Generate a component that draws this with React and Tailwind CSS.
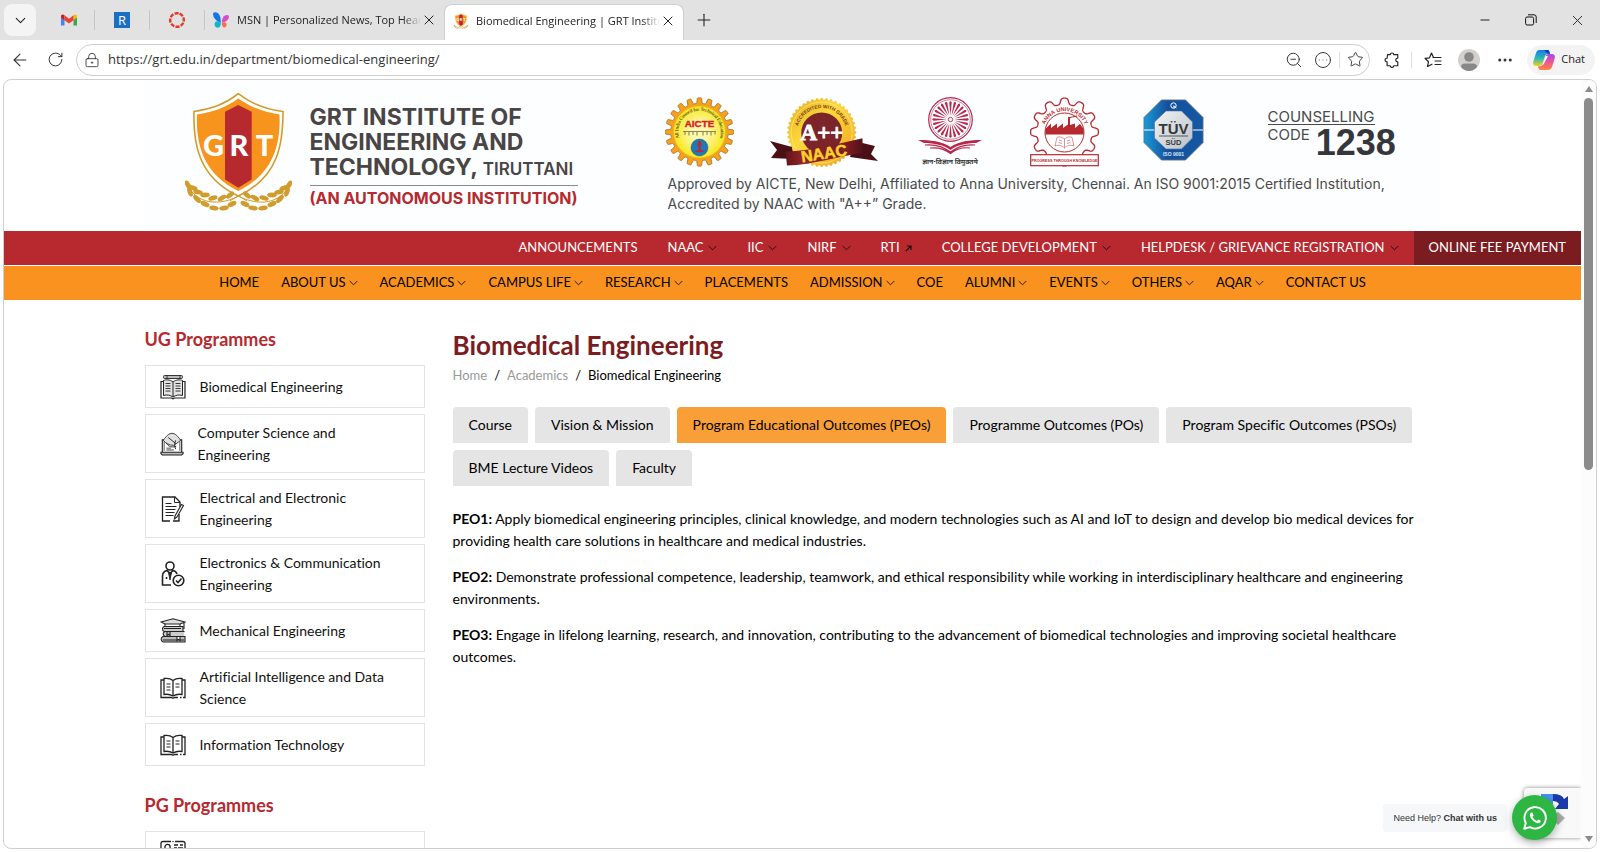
import React from 'react';
import {
    ArrowLeft, RotateCw, LockKeyhole, ZoomOut, Star, Plus, X, ChevronDown, Minus, Ellipsis, CircleEllipsis
} from 'lucide-react';

const wavePath = (cx, cy, radius, depth, teeth, sharp) => {
    const points = [];
    for (let i = 0; i < 480; i++) {
        const a = (i / 480) * Math.PI * 2;
        const r = radius - depth / 2 + (depth / 2) * Math.tanh(sharp * Math.cos(teeth * a));
        points.push(`${(cx + r * Math.sin(a)).toFixed(2)} ${(cy - r * Math.cos(a)).toFixed(2)}`);
    }
    return `M${points.join('L')}Z`;
};

const topLinks = [
    { label: 'ANNOUNCEMENTS' },
    { label: 'NAAC', menu: true },
    { label: 'IIC', menu: true },
    { label: 'NIRF', menu: true },
    { label: 'RTI', external: true },
    { label: 'COLLEGE DEVELOPMENT', menu: true },
    { label: 'HELPDESK / GRIEVANCE REGISTRATION', menu: true },
];

const mainLinks = [
    { label: 'HOME' },
    { label: 'ABOUT US', menu: true },
    { label: 'ACADEMICS', menu: true },
    { label: 'CAMPUS LIFE', menu: true },
    { label: 'RESEARCH', menu: true },
    { label: 'PLACEMENTS' },
    { label: 'ADMISSION', menu: true },
    { label: 'COE' },
    { label: 'ALUMNI', menu: true },
    { label: 'EVENTS', menu: true },
    { label: 'OTHERS', menu: true },
    { label: 'AQAR', menu: true },
    { label: 'CONTACT US' },
];

const tabs = [
    'Course',
    'Vision & Mission',
    'Program Educational Outcomes (PEOs)',
    'Programme Outcomes (POs)',
    'Program Specific Outcomes (PSOs)',
    'BME Lecture Videos',
    'Faculty',
];

const outcomes = [
    { id: 'PEO1:', text: 'Apply biomedical engineering principles, clinical knowledge, and modern technologies such as AI and IoT to design and develop bio medical devices for providing health care solutions in healthcare and medical industries.' },
    { id: 'PEO2:', text: 'Demonstrate professional competence, leadership, teamwork, and ethical responsibility while working in interdisciplinary healthcare and engineering environments.' },
    { id: 'PEO3:', text: 'Engage in lifelong learning, research, and innovation, contributing to the advancement of biomedical technologies and improving societal healthcare outcomes.' },
];

/* ---------- Logos ---------- */

const leaves = [
    [3, 92, 60], [8, 95, 20], [5, 99, 70], [13, 99, 10], [12, 106, 45], [20, 102, 0],
    [20, 111, 25], [28, 105, -15], [29, 115, 10], [37, 105, -30], [39, 115, -10], [45, 102, -40], [47, 111, -25],
];

const Laurel = () => (
    <g fill="#d09c2c">
        {leaves.map(([x, y, angle]) => (
            <ellipse key={`${x}-${y}`} cx={x} cy={y} rx="4.8" ry="2.4" transform={`rotate(${angle} ${x} ${y})`} />
        ))}
        <path d="M1 89C8 107 28 116 54 103L62 108" fill="none" stroke="#d09c2c" strokeWidth="1" />
    </g>
);

const Shield = ({ className }) => (
    <svg viewBox="0 0 107 119" className={className} aria-label="GRT">
        <path d="M53.3.7C42 10 25 16.500 9 18.500C8 50 13 84 53.300 103C94 84 98 50 98 18.500C82 16.500 65 10 53.300.7Z" fill="#fff" stroke="#d09c2c" strokeWidth="1.6" />
        <path d="M53.300 5.500C42 14 27 19.500 12 21.500C11 50 17 80 53.300 98C90 80 95.500 50 94.500 21.500C80 19.500 65 14 53.300 5.500Z" fill="#f7941d" />
        <path d="M40 18.700L53.300 12L66.700 18.700V86.500L53.300 94.700L40 86.500Z" fill="#b6292f" />
        <g fill="#fff" fontFamily="Lato, sans-serif" fontWeight="900" fontSize="29" textAnchor="middle">
            <text x="28.500" y="63">G</text>
            <text x="53.800" y="63">R</text>
            <text x="79.500" y="63">T</text>
        </g>
        <Laurel />
        <g transform="matrix(-1 0 0 1 107 0)"><Laurel /></g>
    </svg>
);

const AicteLogo = () => (
    <svg viewBox="0 0 69 70" className="w-[69px] h-[70px] shrink-0" aria-label="AICTE">
        <defs>
            <radialGradient id="aicte">
                <stop offset="0.3" stopColor="#fff9b0" />
                <stop offset="1" stopColor="#f8e71c" />
            </radialGradient>
            <path id="aicteArc" d="M15.500 50A24.200 24.200 0 1 1 53.500 50" />
        </defs>
        <path d={wavePath(34.5, 35, 34.2, 5.5, 20, 4)} fill="#f5a01e" stroke="#9a7430" strokeWidth="0.8" />
        <circle cx="34.500" cy="35" r="26" fill="url(#aicte)" stroke="#e8b91b" strokeWidth="0.6" />
        <text fontSize="5" fontWeight="700" fontFamily="Liberation Serif, serif" fill="#6e6428" dy="3">
            <textPath href="#aicteArc" startOffset="50%" textAnchor="middle">All India Council for Technical Education</textPath>
        </text>
        <text x="34.500" y="30" fontSize="9.800" fontWeight="700" fontFamily="Liberation Sans, sans-serif" textAnchor="middle" fill="#d5202a" stroke="#d5202a" strokeWidth="0.4">AICTE</text>
        <path d="M18 34.500H51M20 34.500v3.500M24 34.500v4M28 34.500v3.500M32 34.500v4M38 34.500v4M42 34.500v3.500M46 34.500v4M50 34.500v3" stroke="#8c8350" strokeWidth="1.100" fill="none" />
        <circle cx="34.500" cy="50.500" r="8.500" fill="#2079b5" stroke="#175b8b" strokeWidth="0.500" />
        <path d="M34.500 43C37 46 37 48 35.500 50V52.500L40 55H29L33.500 52.500V50C32 48 32 46 34.500 43Z" fill="#b62a35" />
    </svg>
);

const NaacLogo = () => (
    <svg viewBox="0 0 108 71" className="w-[108px] h-[71px] shrink-0" aria-label="NAAC A++">
        <defs>
            <linearGradient id="seal" x1="0" y1="0" x2="1" y2="1">
                <stop offset="0" stopColor="#e5a91c" />
                <stop offset="0.400" stopColor="#fbd93c" />
                <stop offset="1" stopColor="#f0a01c" />
            </linearGradient>
            <linearGradient id="ribbon">
                <stop offset="0" stopColor="#5f151b" />
                <stop offset="0.200" stopColor="#8f2227" />
                <stop offset="0.800" stopColor="#7e1c22" />
                <stop offset="1" stopColor="#4f1218" />
            </linearGradient>
            <path id="naacArc" d="M27.500 39A24.500 24.500 0 1 1 76 39" />
        </defs>
        <path d={wavePath(51.7, 35.5, 35, 2.5, 44, 1)} fill="url(#seal)" />
        <circle cx="51.700" cy="35.500" r="30.500" fill="none" stroke="#fbe682" strokeWidth="0.800" />
        <text fontSize="4.800" fontFamily="Liberation Sans, sans-serif" fontWeight="700" fill="#7b3b1c">
            <textPath href="#naacArc" startOffset="50%" textAnchor="middle">ACCREDITED WITH GRADE</textPath>
        </text>
        <circle cx="51.700" cy="36" r="20.500" fill="#7b2429" />
        <text x="52" y="43" fontFamily="Liberation Serif, serif" fontSize="23" fontWeight="700" textAnchor="middle" fill="#fff" stroke="#fff" strokeWidth="0.900">A++</text>
        <path d="M0 44L22 50L24 62L1 61L7 53Z" fill="#4b1015" />
        <path d="M108 64L101 57L105 49L84 44L80 60Z" fill="#4b1015" />
        <path d="M15.500 54.500C42 54 66 47 92.500 41.300V56C67 59 44 68 17 68.500Z" fill="url(#ribbon)" />
        <text x="54" y="62" fontFamily="Liberation Sans, sans-serif" fontWeight="700" fontSize="16" textAnchor="middle" fill="#f6d32b" stroke="#f6d32b" strokeWidth="0.500" transform="rotate(-9 53 57)">NAAC</text>
    </svg>
);

const UgcLogo = () => (
    <svg viewBox="0 0 64 70" className="w-16 h-[70px] shrink-0" fill="none" stroke="#b8264a" aria-label="UGC">
        <circle cx="32.500" cy="22.500" r="21.800" strokeWidth="1.200" />
        <circle cx="32.500" cy="22.500" r="19.800" strokeWidth="0.600" />
        {Array.from({ length: 24 }, (_, i) => (
            <path key={i} d="M32.500 18.500L31.300 5.500Q32.500 3 33.700 5.500Z" fill="#b8264a" stroke="none" transform={`rotate(${i * 15} 32.500 22.500)`} />
        ))}
        <circle cx="32.500" cy="22.500" r="2.200" fill="#fff" strokeWidth="0.900" />
        <path d="M0 43C12 43 24 44 32.500 50C41 44 52 43 64 43L58 46C48 46 39 48 32.500 53C26 48 16 46 6 46Z" fill="#b8264a" stroke="none" />
        <path d="M7 48C18 47 26 50 32.500 55C39 50 47 47 57 48M12 51C21 50 27 52 32.500 56.500C38 52 44 50 52 51" strokeWidth="1.200" />
        <text x="32" y="66.500" textAnchor="middle" fontFamily="Noto Sans Devanagari, Noto Sans, sans-serif" fontSize="6.800" fontWeight="700" fill="#333" stroke="none">ज्ञान-विज्ञान विमुक्तये</text>
    </svg>
);

const AnnaLogo = () => (
    <svg viewBox="0 0 69 70" className="w-[69px] h-[70px] shrink-0" fill="none" stroke="#b6292f" aria-label="Anna University">
        <defs><path id="annaArc" d="M13.500 38A21.400 21.400 0 1 1 56 38" /></defs>
        <path d={wavePath(34.5, 35, 34, 6.5, 12, 2)} fill="#fff" strokeWidth="1.300" />
        <circle cx="34.500" cy="35.500" r="19.500" strokeWidth="1" />
        <text fontSize="5.600" fontFamily="Liberation Sans, sans-serif" fontWeight="700" fill="#b6292f" stroke="none">
            <textPath href="#annaArc" startOffset="50%" textAnchor="middle">ANNA UNIVERSITY</textPath>
        </text>
        <path d="M15.300 37.500V32L21 26.500V31L27 26.500V31L33 26.500V31L38 27.500V20H40V28L45 26.500V31L50 27L53.700 32V37.500Z" fill="#b6292f" stroke="none" />
        <path d="M40 20.500L47 19" strokeWidth="1" />
        <path d="M34.500 51V42C31 39.500 29 39.500 27 40.500L25 49C29 47.500 32 48.500 34.500 51C37 48.500 40 47.500 44 49L42 40.500C40 39.500 38 39.500 34.500 42M29 43l3 1M28.500 45.500l3.500 1M40 43l-3 1M40.500 45.500l-3.500 1" strokeWidth="0.500" />
        <rect x="0.700" y="57.700" width="67.600" height="11" fill="#fff" strokeWidth="1.200" />
        <text x="34.500" y="64.600" textAnchor="middle" fontSize="3.700" fontFamily="Liberation Sans, sans-serif" fontWeight="700" fill="#b6292f" stroke="none">PROGRESS THROUGH KNOWLEDGE</text>
    </svg>
);

const TuvLogo = () => (
    <svg viewBox="0 0 61 62" className="w-[61px] h-[62px] shrink-0" aria-label="TÜV SÜD ISO 9001">
        <defs>
            <linearGradient id="tuv" x1="0" y1="0" x2="1" y2="0">
                <stop offset="0" stopColor="#1a9bd8" />
                <stop offset="0.400" stopColor="#14509c" />
                <stop offset="1" stopColor="#1458a4" />
            </linearGradient>
            <linearGradient id="steel" x1="0" y1="0" x2="1" y2="1">
                <stop offset="0" stopColor="#f2f4f5" />
                <stop offset="1" stopColor="#b9bfc4" />
            </linearGradient>
        </defs>
        <path d="M18.500 1H42.500L60 18.500V43.500L42.500 61H18.500L1 43.500V18.500Z" fill="url(#tuv)" stroke="#5c6c80" strokeWidth="0.900" />
        <path d="M1 31H60" stroke="#fff" strokeWidth="1.200" />
        <path d="M23 12H38.500L49.500 23V39L38.500 50H23L11.500 39V23Z" fill="url(#steel)" stroke="#51739c" strokeWidth="0.600" />
        <circle cx="30.500" cy="6.500" r="2.700" fill="none" stroke="#fff" strokeWidth="1" />
        <path d="M31 6.500v3M30.500 7l3 2" stroke="#fff" strokeWidth="0.800" />
        <g fontFamily="Liberation Sans, sans-serif" textAnchor="middle">
            <text x="30.500" y="35" fontSize="15" fontWeight="700" fill="#34383c">TÜV</text>
            <path d="M16 37H45" stroke="#34383c" strokeWidth="0.800" />
            <text x="30.500" y="46" fontSize="7.500" fontWeight="700" fill="#34383c">SÜD</text>
            <text x="30.500" y="57" fontSize="5" fontWeight="700" fill="#dce9f7">ISO 9001</text>
        </g>
    </svg>
);

/* ---------- Sidebar icons ---------- */

const iconProps = {
    viewBox: '0 0 26 26',
    fill: 'none',
    stroke: '#222',
    strokeWidth: 1.2,
};

const NotebookIcon = () => (
    <svg {...iconProps} className="w-[26px] h-[26px] shrink-0">
        <rect x="3.500" y="1.500" width="19" height="3" rx="1" fill="#bbb" strokeWidth="0.900" />
        <path d="M7 1.500v3M20 1.500v3" strokeWidth="0.800" />
        <path d="M3 7.500H1V24h10.500l1.500.8 1.500-.8H25V7.500h-2" />
        <path d="M13 8C10 5.500 6 5.500 3.500 6.500V21.500C7 20.500 10 21 13 23C16 21 19 20.500 22.500 21.500V6.500C20 5.500 16 5.500 13 8ZV23" fill="#e4e4e4" strokeWidth="1" />
        <path d="M5.500 9.500h5M5.500 12h5M5.500 14.500h5M5.500 17h5M15.500 9.500h5M15.500 12h5M15.500 14.500h5M15.500 17h5" strokeWidth="0.900" />
    </svg>
);

const LaptopIcon = () => (
    <svg {...iconProps} className="w-6 h-[26px] shrink-0">
        <path d="M2.500 22V8.500H5M23.500 22V8.500H21" strokeWidth="1.200" />
        <path d="M4.500 20.500V10M21.500 10V20.500" strokeWidth="0.800" />
        <path d="M3.500 9C8 3 10 1.500 13 1.500S18 3 22.500 9L15 14.500C10 14.500 6 12 3.500 9Z" fill="#e2e2e2" strokeWidth="0.900" />
        <path d="M7 12C9 16 13 17 17.500 15.500M9 6L17 12.500M17 9C15.500 13 15.500 15 17 18.500" strokeWidth="1" />
        <path d="M7 17.500h5M7 19.500h8" strokeWidth="0.900" />
        <path d="M1 22h24v1.500L23.500 25h-21L1 23.500Z" strokeWidth="1.100" fill="#bbb" />
    </svg>
);

const PaperIcon = () => (
    <svg {...iconProps} className="w-[26px] h-[26px] shrink-0">
        <path d="M19 18v7H13M10 25H2.500V1H15l5 5v5" strokeWidth="1.300" />
        <path d="M14.500 1v5.500H20" strokeWidth="1" />
        <path d="M5.500 7.500h6M5.500 10.500h11M5.500 13.500h10M5.500 16.500h9M5.500 19.500h8" strokeWidth="1.100" />
        <path d="M21.500 8.500l2 1-6.500 11.500-2.500 2 .5-3Z" fill="#fff" strokeWidth="1.100" />
    </svg>
);

const PersonIcon = () => (
    <svg {...iconProps} strokeWidth="1.600" className="w-[26px] h-[26px] shrink-0">
        <circle cx="10" cy="5" r="4" />
        <path d="M11 24H2.500V15C2.500 11.500 5 10 7 9.500L10 12.500L13 9.500C15 10 16.500 11 17 13M6.500 16v2" />
        <path d="M8.500 11.500h3L10 19Z" fill="#222" strokeWidth="0.900" />
        <circle cx="18.500" cy="19.500" r="5.300" />
        <path d="M16 19.500l2 2 3.500-4" />
    </svg>
);

const BooksIcon = () => (
    <svg {...iconProps} strokeWidth="1.100" className="w-[26px] h-[26px] shrink-0">
        <path d="M1 4L13 .8L25 4L20 6H5Z M24 4v7" fill="#ddd" />
        <path d="M5 6v2.500h15V6" />
        <path d="M4 8.500h19v5H4c-2-1-2-4 0-5ZM4 10.500h17M24.500 13.500H5c-2.500 1-2.500 3.500 0 5h19" fill="#ccc" />
        <path d="M3 18.500h22v5.500H3c-2.500-1-2.500-4.500 0-5.500ZM3 22h21M7 14v3.500l1.500-1 1.500 1V14M17 19v3.500l1.500-1 1.500 1V19" fill="#bbb" />
    </svg>
);

const BookIcon = () => (
    <svg {...iconProps} strokeWidth="1.300" className="w-[26px] h-[26px] shrink-0">
        <path d="M4 5H1V22.500H11.500L13 23.300L14.500 22.500H18M20 22.500h1.500M23 22.500h2V5H22" />
        <path d="M13 5.500C10.500 3.500 7 3 4 3.500V19.500C7 19 10.500 19.500 13 21C15.500 19.500 19 19 22 19.500V3.500C19 3 15.500 3.500 13 5.500ZV21" />
        <path d="M6.500 9h4M6.500 12h4M6.500 15h4M15.500 9h4M15.500 12h4" strokeWidth="1" />
    </svg>
);

const CardIcon = () => (
    <svg {...iconProps} strokeWidth="1.300" className="w-[26px] h-[26px] shrink-0">
        <path d="M11 1.500H3Q1 1.500 1 3.500V22.500H25V3.500Q25 1.500 23 1.500H15M13 1v1" />
        <circle cx="7.500" cy="7" r="2.600" />
        <path d="M4 14C4 11 11 11 11 14M14 5h4M20 5h3M14 8h3M18 8h5" />
    </svg>
);

const programmes = [
    { label: 'Biomedical Engineering', icon: NotebookIcon },
    { label: 'Computer Science and Engineering', icon: LaptopIcon },
    { label: 'Electrical and Electronic Engineering', icon: PaperIcon },
    { label: 'Electronics & Communication Engineering', icon: PersonIcon },
    { label: 'Mechanical Engineering', icon: BooksIcon },
    { label: 'Artificial Intelligence and Data Science', icon: BookIcon },
    { label: 'Information Technology', icon: BookIcon },
];

/* ---------- Browser chrome ---------- */

const TabStrip = () => (
    <div className="h-10 bg-[#e2e2e2] flex items-center text-[11px] text-[#222] shrink-0">
        <button aria-label="Tab actions" className="ml-1 w-8 h-8 rounded-lg bg-[#f4f4f4] flex items-center justify-center">
            <ChevronDown size={17} strokeWidth={1.5} />
        </button>
        <button aria-label="Gmail" className="w-[59px] h-5 pl-2 border-r border-[#c6c6c6] flex items-center justify-center">
            <svg viewBox="0 0 16 12" className="w-4 h-3">
                <path d="M0 1.500V11.500h3.500V5Z" fill="#4285f4" />
                <path d="M16 1.500V11.500h-3.500V5Z" fill="#34a853" />
                <path d="M12.500 5V1.200Q14.500-.5 16 1.500V3.500L12.500 6.200Z" fill="#fbbc04" />
                <path d="M0 3.500V1.500Q1.500-.5 3.500 1.200V6.200Z" fill="#c5221f" />
                <path d="M3.500 1.200L8 4.700L12.500 1.200V6.200L8 9.500L3.500 6.200Z" fill="#ea4335" />
            </svg>
        </button>
        <button aria-label="R" className="w-[55px] h-5 border-r border-[#c6c6c6] flex items-center justify-center">
            <span className="w-4 h-4 bg-[#1b6ec2] text-white text-[13px] leading-4 text-center">R</span>
        </button>
        <button aria-label="Canvas" className="w-[55px] h-5 border-r border-[#c6c6c6] flex items-center justify-center">
            <svg viewBox="0 0 16 16" className="w-4 h-4">
                <circle cx="8" cy="8" r="6.800" fill="none" stroke="#e4392b" strokeWidth="2.400" strokeDasharray="4.100 1.240" transform="rotate(-68 8 8)" />
            </svg>
        </button>
        <div className="w-[239px] pl-2 flex items-center">
            <svg viewBox="0 0 16 16" className="w-4 h-4 shrink-0">
                <path d="M0 2Q0 0 2.500.3Q6.500 1 7.500 6L7.800 11Q4 9.500 2 7Q0 4.500 0 2Z" fill="#1674ea" />
                <path d="M1.500 12Q2 8.500 5 9.500L7.800 11Q8 15.800 4.500 15.800Q1.500 15 1.500 12Z" fill="#12b5c5" />
                <path d="M16 4.500Q15.500 2.500 12.500 3.300Q9 5 8.800 10.500Q12 10.500 14 8.500Q16 6.500 16 4.500Z" fill="#d34fc4" />
                <path d="M13.500 11.500Q12.500 9.500 8.800 10.500Q8.800 15.500 11.500 15.500Q14 14.500 13.500 11.500Z" fill="#f5714b" />
            </svg>
            <span className="ml-2 w-[184px] overflow-hidden whitespace-nowrap mask-r-from-90%">MSN | Personalized News, Top Headlines</span>
            <button aria-label="Close tab"><X size={16} strokeWidth={1.5} /></button>
        </div>
        <div className="w-60 h-9 mt-1 pl-2 pb-[3px] rounded-t-lg bg-white flex items-center border-t border-x border-[#d0d0d0]">
            <Shield className="w-4 h-4 shrink-0" />
            <span className="ml-[7px] w-[184px] overflow-hidden whitespace-nowrap mask-r-from-90%">Biomedical Engineering | GRT Institute of Engineering</span>
            <button aria-label="Close tab"><X size={16} strokeWidth={1.5} /></button>
        </div>
        <button aria-label="New tab" className="ml-[10px]"><Plus size={20} strokeWidth={1.3} /></button>
        <div className="ml-auto flex items-center">
            <button aria-label="Minimize" className="w-[46px] flex justify-center"><Minus size={14} strokeWidth={1.800} /></button>
            <button aria-label="Restore" className="w-[46px] flex justify-center">
                <svg viewBox="0 0 12 12" className="w-3 h-3" fill="none" stroke="#111">
                    <rect x="0.600" y="3" width="8" height="8" rx="1.500" />
                    <path d="M3 .8h6Q11.200.8 11.200 3v6" />
                </svg>
            </button>
            <button aria-label="Close" className="w-[46px] flex justify-center"><X size={17} strokeWidth={1.300} /></button>
        </div>
    </div>
);

const Toolbar = () => (
    <div className="h-[39px] bg-white flex items-center text-[#333] shrink-0">
        <button aria-label="Back" className="ml-[10px]"><ArrowLeft size={20} strokeWidth={1.300} /></button>
        <button aria-label="Refresh" className="ml-[17px]"><RotateCw size={17} strokeWidth={1.400} /></button>
        <div className="ml-3 h-8 flex-1 rounded-full border border-[#cfcfcf] flex items-center px-[5px]">
            <LockKeyhole size={16} strokeWidth={1.300} className="ml-[2px] shrink-0" />
            <input
                aria-label="Address"
                readOnly
                value="https://grt.edu.in/department/biomedical-engineering/"
                className="ml-2 flex-1 text-[13px] text-[#333] bg-transparent outline-none"
            />
            <button aria-label="Zoom out"><ZoomOut size={18} strokeWidth={1.300} /></button>
            <button aria-label="More" className="ml-[11px]"><CircleEllipsis size={18} strokeWidth={1.300} /></button>
            <span className="ml-[7px] w-px h-4 bg-[#ddd]" />
            <button aria-label="Favorite" className="ml-[7px]"><Star size={17} strokeWidth={1.300} /></button>
        </div>
        <button aria-label="Extensions" className="ml-[14px]">
            <svg viewBox="0 0 18 18" className="w-4 h-[18px]" fill="none" stroke="#222" strokeWidth="1.300" strokeLinejoin="round">
                <path d="M4 3h3C7 .5 11 .5 11 3h4.500v4C12.500 7 12.500 11 15.500 11v4.500H11C11 18 7 18 7 15.500H3.500V11C.5 11 .5 7 3.500 7Z" />
            </svg>
        </button>
        <span className="ml-[11px] w-px h-4 bg-[#ddd]" />
        <button aria-label="Favorites" className="ml-3">
            <svg viewBox="0 0 18 18" className="w-[18px] h-[18px]" fill="none" stroke="#222" strokeWidth="1.200" strokeLinejoin="round" strokeLinecap="round">
                <path d="M9.500 6.500L7.500 2L5.500 6.800L1 7.300L4.500 10.700L3.500 15.500L8 13.200M9 6.500H17M11 10H17M11 13.500H17" />
            </svg>
        </button>
        <button aria-label="Profile" className="ml-4">
            <svg viewBox="0 0 22 22" className="w-[22px] h-[22px]">
                <circle cx="11" cy="11" r="11" fill="#d2d0ce" />
                <circle cx="11" cy="8" r="4.800" fill="#8a8886" />
                <path d="M3 18Q3 14.500 7 14.500H15Q19 14.500 19 18Q15.500 22 11 22T3 18Z" fill="#8a8886" />
            </svg>
        </button>
        <button aria-label="Settings" className="ml-4"><Ellipsis size={18} strokeWidth={2} /></button>
        <button className="ml-[13px] mr-[5px] h-[30px] pl-[6px] pr-[10px] rounded-full bg-[#f3f3f3] flex items-center gap-[6px] text-[11px] text-[#222]">
            <svg viewBox="0 0 22 20" className="w-[22px] h-5">
                <defs>
                    <linearGradient id="cpl" x1="0" y1="0" x2="0" y2="1"><stop offset="0" stopColor="#1b7be8" /><stop offset="0.500" stopColor="#27b6b8" /><stop offset="1" stopColor="#f4d21f" /></linearGradient>
                    <linearGradient id="cpr" x1="0" y1="0" x2="0" y2="1"><stop offset="0" stopColor="#a24bf0" /><stop offset="0.500" stopColor="#ee5296" /><stop offset="1" stopColor="#ff8a3c" /></linearGradient>
                </defs>
                <path d="M6 0H15Q16 0 16.500 2L17 4Q13 3 12 6L9.500 14Q9 16 6 16H3Q-1 15.500.5 11L3 3Q4 0 6 0Z" fill="url(#cpl)" />
                <path d="M11 0h4Q16 0 16.500 2L17 4Q14 4 13 2Z" fill="#123fb0" />
                <path d="M16 20H7Q6 20 5.500 18L5 16Q9 17 10 14L12.500 6Q13 4 16 4H19Q23 4.500 21.500 9L19 17Q18 20 16 20Z" fill="url(#cpr)" />
                <path d="M12.500 6L15 6L10.500 14.500H8.800Q9.700 14 10 13Z" fill="#fff" />
            </svg>
            Chat
        </button>
    </div>
);

/* ---------- Page ---------- */

const NavLink = ({ link, className }) => (
    <a href="#" className={className}>
        {link.label}
        {link.menu && (
            <svg viewBox="0 0 9 6" className="w-[9px] h-[6px]" fill="none" stroke="#111" strokeWidth="0.900">
                <path d="M.7 1L4.500 4.800L8.300 1" />
            </svg>
        )}
        {link.external && (
            <svg viewBox="0 0 7 7" className="w-[7px] h-[7px]" fill="none" stroke="#111" strokeWidth="1.200">
                <path d="M.8 6.200L6 1M2 1H6V5" />
            </svg>
        )}
    </a>
);

const Header = () => (
    <header>
        <div className="h-[151px] max-w-[1296px] mx-auto bg-[#fdfeff] flex items-start pl-10">
            <a href="#" className="mt-[13px] flex items-start">
                <Shield className="w-[107px] h-[119px] shrink-0" />
                <div className="ml-[18px] mt-3 font-[Inter,sans-serif] font-bold text-[#4a4545] whitespace-nowrap">
                    <div className="text-[23px] leading-[25px]">GRT INSTITUTE OF</div>
                    <div className="text-[23px] leading-[25px]">ENGINEERING AND</div>
                    <div className="text-[23px] leading-[25px]">TECHNOLOGY, <span className="text-[17px] font-semibold">TIRUTTANI</span></div>
                    <div className="mt-[3px] pt-1 border-t border-[#8a8888] text-base leading-4 text-[#b6292f]">(AN AUTONOMOUS INSTITUTION)</div>
                </div>
            </a>
            <div className="ml-auto mr-10 mt-[17px] w-[736px] font-[Inter,sans-serif] text-[#4a4a4a]">
                <div className="flex items-start">
                    <AicteLogo />
                    <div className="ml-9"><NaacLogo /></div>
                    <div className="ml-10"><UgcLogo /></div>
                    <div className="ml-12"><AnnaLogo /></div>
                    <div className="ml-11 mt-[2px]"><TuvLogo /></div>
                    <div className="ml-16 mt-[13px]">
                        <div className="w-fit text-[15px] leading-[14px] border-b border-[#4a4a4a]">COUNSELLING</div>
                        <div className="flex items-start text-[15px] leading-5">
                            CODE
                            <span className="ml-[6px] text-4xl leading-9 font-bold font-['Liberation_Sans',sans-serif] text-[#35363a]">1238</span>
                        </div>
                    </div>
                </div>
                <p className="ml-[3px] mt-[6px] text-sm leading-5 whitespace-nowrap">
                    Approved by AICTE, New Delhi, Affiliated to Anna University, Chennai. An ISO 9001:2015 Certified Institution,<br />
                    Accredited by NAAC with "A++” Grade.
                </p>
            </div>
        </div>
        <nav className="h-[34px] bg-[#b7292f] flex justify-end text-[13px] text-white">
            {topLinks.map((link) => (
                <NavLink key={link.label} link={link} className="px-[15px] flex items-center gap-[5px]" />
            ))}
            <a href="#" className="px-[15px] flex items-center bg-[#7b1c21]">ONLINE FEE PAYMENT</a>
        </nav>
        <nav className="mt-px h-[34px] bg-[#f9921e] flex justify-center text-[13px] text-black">
            {mainLinks.map((link) => (
                <NavLink key={link.label} link={link} className="px-[11px] flex items-center gap-[3px]" />
            ))}
        </nav>
    </header>
);

const Sidebar = () => (
    <aside className="w-[280px] shrink-0">
        <h2 className="text-lg leading-6 font-bold text-[#b7292f]">UG Programmes</h2>
        <ul className="mt-[14px] flex flex-col gap-[6px]">
            {programmes.map(({ label, icon: Icon }) => (
                <li key={label}>
                    <a href="#" className="min-h-[43px] pt-[7px] pb-[6px] pl-[14px] pr-8 border border-[#e3e3e3] flex items-center gap-[14px] text-sm leading-[22px] text-[#111]">
                        <Icon />
                        {label}
                    </a>
                </li>
            ))}
        </ul>
        <h2 className="mt-[27px] text-lg leading-6 font-bold text-[#b7292f]">PG Programmes</h2>
        <a href="#" aria-label="PG programme" className="mt-[14px] min-h-[43px] pl-[14px] border border-[#e3e3e3] flex items-center">
            <CardIcon />
        </a>
    </aside>
);

const Content = () => (
    <main className="ml-7 flex-1 min-w-0">
        <h1 className="text-[26px] leading-9 font-bold text-[#7b1c21]">Biomedical Engineering</h1>
        <div className="flex gap-[7px] text-[13px] leading-6 text-black">
            <a href="#" className="text-[#999]">Home</a>
            <span>/</span>
            <a href="#" className="text-[#999]">Academics</a>
            <span>/</span>
            <span>Biomedical Engineering</span>
        </div>
        <div className="mt-5 flex flex-wrap gap-[7px]">
            {tabs.map((tab, index) => (
                <button
                    key={tab}
                    className={`h-9 px-4 rounded-t text-sm text-black ${index === 2 ? 'bg-[#f99f38]' : 'bg-[#e5e5e5]'}`}
                >
                    {tab}
                </button>
            ))}
        </div>
        <div className="mt-[22px] flex flex-col gap-[14px] text-sm leading-[22px] text-black">
            {outcomes.map((item) => (
                <p key={item.id}><strong>{item.id}</strong> {item.text}</p>
            ))}
        </div>
    </main>
);

const ChatWidget = () => (
    <>
        <div className="absolute right-0 bottom-[10px] w-[57px] h-[50px] bg-[#f9f9f9] rounded-l-sm shadow-[0_0_4px_#888] overflow-hidden">
            <svg viewBox="0 0 57 50" className="w-[57px] h-[50px]">
                <path d="M17 6H29V16L17 20Z" fill="#4a90f0" />
                <path d="M29 6Q38 6 40 11L44 8V21H31L35 16Q33 13 29 13Z" fill="#1c3aa9" />
                <path d="M34 24L41 30L34 37L27 30Z" fill="#ababab" />
            </svg>
        </div>
        <div className="absolute right-6 bottom-2 flex items-center gap-[5px]">
            <div className="h-7 px-[10px] rounded bg-[#f5f7f9] text-[9px] leading-7 font-['Liberation_Sans',sans-serif] text-[#333]">
                Need Help? <strong>Chat with us</strong>
            </div>
            <button aria-label="WhatsApp" className="w-[45px] h-[45px] rounded-full bg-[#2db742] shadow-[0_3px_8px_rgba(0,0,0,0.3)] flex items-center justify-center">
                <svg viewBox="0 0 24 24" className="w-6 h-6">
                    <path d="M1.200 22.800L2.800 17A10.700 10.700 0 1 1 7 21.200Z" fill="none" stroke="#fff" strokeWidth="1.900" strokeLinejoin="round" />
                    <path d="M8.300 6.500C7 7 6.700 8.500 7 9.700C7.800 13 11 16.200 14.500 17.200C16 17.500 17.700 16.700 17.800 14.800L15.200 13.400L13.900 15C12 14.300 10.300 12.700 9.400 10.800L10.600 9.400L9.400 6.600Z" fill="#fff" />
                </svg>
            </button>
        </div>
    </>
);

const App = () => {
    return (
        <div className="h-screen flex flex-col overflow-hidden bg-white font-['Open_Sans',sans-serif]">
            <TabStrip />
            <Toolbar />
            <div className="flex-1 min-h-0 ml-[3px] mr-[3px] mb-[3px] flex border border-[#cfcfcf] rounded-lg overflow-hidden font-[Lato,sans-serif] [font-variant-ligatures:no-common-ligatures]">
                <div className="relative flex-1 min-w-0 overflow-hidden">
                    <Header />
                    <div className="max-w-[1296px] mx-auto pt-[27px] flex items-start">
                        <Sidebar />
                        <Content />
                    </div>
                    <ChatWidget />
                </div>
                <div className="w-[15px] shrink-0 bg-[#fcfcfc] flex flex-col items-center py-[6px]">
                    <span className="border-x-4 border-x-transparent border-b-[6px] border-b-[#8b8b8b]" />
                    <span className="mt-[6px] w-[9px] h-[372px] rounded-full bg-[#8b8b8b]" />
                    <span className="mt-auto border-x-4 border-x-transparent border-t-[6px] border-t-[#8b8b8b]" />
                </div>
            </div>
        </div>
    );
};

export default App;
